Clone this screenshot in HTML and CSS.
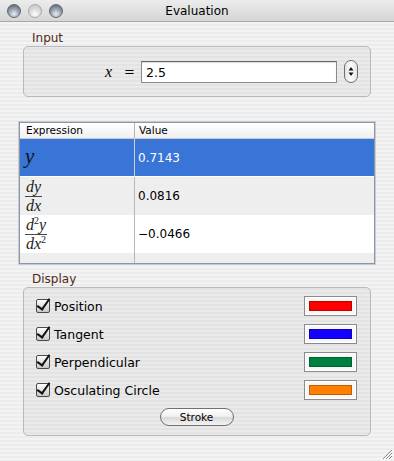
FILE: index.html
```html
<!DOCTYPE html>
<html lang="en">
<head>
    <meta charset="UTF-8">
    <title>Evaluation</title>
    <link rel="stylesheet" href="styles.css">
</head>
<body>
    <div class="window">
        <div class="titlebar">
            <div class="lights">
                <span class="light dark"></span>
                <span class="light pale"></span>
                <span class="light dark"></span>
            </div>
            <div class="title">Evaluation</div>
        </div>

        <div class="content">
            <div class="group-label">Input</div>
            <div class="group input-group">
                <span class="var">x</span>
                <span class="eq">=</span>
                <input class="field" type="text" value="2.5">
                <span class="stepper">
                    <svg width="14" height="23" viewBox="0 0 14 23">
                        <path d="M7 7 L4.5 10.5 H9.5 Z" fill="#111"/>
                        <path d="M7 16 L4.5 12.5 H9.5 Z" fill="#111"/>
                    </svg>
                </span>
            </div>

            <div class="table">
                <div class="thead">
                    <div class="cell col-expr">Expression</div>
                    <div class="cell col-val">Value</div>
                </div>
                <div class="row selected">
                    <div class="cell col-expr"><span class="math big">y</span></div>
                    <div class="cell col-val">0.7143</div>
                </div>
                <div class="row alt">
                    <div class="cell col-expr">
                        <span class="frac math">
                            <span class="num">dy</span>
                            <span class="den">dx</span>
                        </span>
                    </div>
                    <div class="cell col-val">0.0816</div>
                </div>
                <div class="row">
                    <div class="cell col-expr">
                        <span class="frac math">
                            <span class="num">d<sup>2</sup>y</span>
                            <span class="den">dx<sup>2</sup></span>
                        </span>
                    </div>
                    <div class="cell col-val">&minus;0.0466</div>
                </div>
                <div class="row alt filler">
                    <div class="cell col-expr"></div>
                    <div class="cell col-val"></div>
                </div>
            </div>

            <div class="group-label display-label">Display</div>
            <div class="group display-group">
                <div class="option">
                    <span class="check"></span>
                    <span class="opt-name">Position</span>
                    <span class="well"><span class="swatch red"></span></span>
                </div>
                <div class="option">
                    <span class="check"></span>
                    <span class="opt-name">Tangent</span>
                    <span class="well"><span class="swatch blue"></span></span>
                </div>
                <div class="option">
                    <span class="check"></span>
                    <span class="opt-name">Perpendicular</span>
                    <span class="well"><span class="swatch green"></span></span>
                </div>
                <div class="option">
                    <span class="check"></span>
                    <span class="opt-name">Osculating Circle</span>
                    <span class="well"><span class="swatch orange"></span></span>
                </div>
                <div class="buttons">
                    <button class="pill-btn">Stroke</button>
                </div>
            </div>
        </div>

        <svg class="grip" width="12" height="12" viewBox="0 0 12 12">
            <path d="M11 2 L2 11 M11 5 L5 11 M11 8 L8 11" stroke="#888" stroke-width="1"/>
            <path d="M12 3 L3 12 M12 6 L6 12 M12 9 L9 12" stroke="#fff" stroke-width="1"/>
        </svg>
    </div>
</body>
</html>
```

FILE: styles.css
```css
* {
    margin: 0;
    padding: 0;
    box-sizing: border-box;
}

body {
    width: 394px;
    height: 461px;
    overflow: hidden;
    font-family: "DejaVu Sans", "Lucida Grande", sans-serif;
    color: #000;
}

.window {
    position: relative;
    width: 394px;
    height: 461px;
    background: repeating-linear-gradient(to bottom, #ececec 0, #ececec 2px, #f3f3f3 2px, #f3f3f3 4px);
}

/* title bar */
.titlebar {
    height: 22px;
    display: flex;
    align-items: center;
    background: linear-gradient(to bottom, #ececec, #d6d6d6);
    border-bottom: 1px solid #a8a8a8;
    position: relative;
}

.lights {
    display: flex;
    gap: 7px;
    padding-left: 7px;
}

.light {
    width: 14px;
    height: 14px;
    border-radius: 50%;
    border: 1px solid #5f6870;
}

.light.dark {
    background: radial-gradient(circle at 50% 75%, #e9eef3 0, #9aa6b1 45%, #4e5863 100%);
}

.light.pale {
    border-color: #a9a9a9;
    background: radial-gradient(circle at 50% 75%, #ffffff 0, #dadada 50%, #bdbdbd 100%);
}

.title {
    position: absolute;
    left: 0;
    right: 0;
    text-align: center;
    font-size: 12px;
    line-height: 22px;
}

.content {
    padding: 0 23px;
}

.group-label {
    margin-top: 9px;
    padding-left: 9px;
    font-size: 12px;
    line-height: 15px;
    color: #4f2a18;
}

.group {
    border: 1px solid #b9b9b9;
    border-radius: 5px;
    background: rgba(0, 0, 0, 0.035);
}

/* input */
.input-group {
    height: 51px;
    display: flex;
    align-items: center;
    padding-left: 81px;
}

.var {
    font-family: "Liberation Serif", serif;
    font-style: italic;
    font-size: 16px;
    width: 19px;
}

.eq {
    font-size: 13px;
    width: 17px;
}

.field {
    width: 196px;
    height: 22px;
    border: 1px solid #8a8a8a;
    border-top-color: #6a6a6a;
    box-shadow: inset 0 1px 1px rgba(0, 0, 0, 0.15);
    padding: 1px 4px 0;
    font-family: "DejaVu Sans", sans-serif;
    font-size: 12.5px;
    outline: none;
}

.stepper {
    margin-left: 7px;
    width: 14px;
    height: 23px;
    border: 1px solid #6e6e6e;
    border-radius: 7px;
    background: linear-gradient(to right, #e4e4e4, #fdfdfd 50%, #e4e4e4);
    display: flex;
}

.stepper svg {
    margin: -1px;
}

/* table */
.table {
    margin: 25px -4px 0;
    height: 142px;
    border: 1px solid #8d97a3;
    box-shadow: 0 0 0 1px #c3cbd5;
    background: #fff;
    overflow: hidden;
}

.thead {
    display: flex;
    height: 16px;
    border-bottom: 1px solid #c9c9c9;
    background: linear-gradient(to bottom, #ffffff, #f0f0f0);
    font-size: 10.5px;
    line-height: 15px;
}

.cell.col-expr {
    width: 115px;
    border-right: 1px solid #b7b7b7;
    padding-left: 6px;
}

.thead .col-val {
    padding-left: 4px;
}

.row {
    display: flex;
    height: 38px;
    align-items: stretch;
    font-size: 12px;
}

.row .cell {
    display: flex;
    align-items: center;
}

.row .col-val {
    padding-left: 3px;
}

.row .col-expr {
    padding-left: 4px;
}

.row.alt {
    background: #eeeeee;
}

.row.selected {
    background: #3875d7;
    color: #fff;
    border-bottom: 1px solid #fff;
}

.row.selected .col-expr {
    color: #111;
    border-right-color: #d0d0d0;
}

.math {
    font-family: "Liberation Serif", serif;
    font-style: italic;
}

.math.big {
    font-size: 21px;
    padding-left: 1px;
    margin-top: -2px;
}

.frac {
    display: inline-flex;
    flex-direction: column;
    align-items: center;
    font-size: 16px;
    line-height: 14px;
    color: #222;
    margin-left: 1px;
}

.frac .num {
    padding: 0 1px 2px;
    border-bottom: 1px solid #444;
}

.frac .den {
    padding-top: 2px;
}

.frac sup {
    font-size: 10px;
    font-style: normal;
    vertical-align: 6px;
    line-height: 0;
}

/* display */
.display-label {
    margin-top: 8px;
}

.display-group {
    height: 149px;
    padding: 4px 13px 0 12px;
}

.option {
    display: flex;
    align-items: center;
    height: 28px;
}

.check {
    width: 14px;
    height: 14px;
    border: 1px solid #4a4a4a;
    border-radius: 2px;
    background: linear-gradient(to bottom, #fdfdfd, #c9c9c9);
    position: relative;
}

.check::after {
    content: "";
    position: absolute;
    left: 3px;
    top: -4px;
    width: 5px;
    height: 12px;
    border-right: 2.5px solid #111;
    border-bottom: 2.5px solid #111;
    transform: rotate(35deg);
}

.opt-name {
    flex: 1;
    margin-left: 4px;
    font-size: 12.5px;
}

.well {
    width: 53px;
    height: 20px;
    border: 1px solid #8a8a8a;
    background: #f7f7f7;
    box-shadow: inset 0 0 0 1px #ffffff;
    display: flex;
    align-items: center;
    justify-content: center;
}

.swatch {
    width: 43px;
    height: 10px;
    border: 1px solid rgba(0, 0, 0, 0.25);
}

.swatch.red { background: #ff0000; }
.swatch.blue { background: #1400ff; }
.swatch.green { background: #008040; }
.swatch.orange { background: #ff8000; }

.buttons {
    display: flex;
    justify-content: center;
    margin-top: 4px;
}

.pill-btn {
    width: 74px;
    height: 18px;
    border: 1px solid #707070;
    border-radius: 9px;
    background: linear-gradient(to bottom, #ffffff, #f1f1f1 45%, #d9d9d9 55%, #f4f4f4);
    font-family: "DejaVu Sans", sans-serif;
    font-size: 10.5px;
    line-height: 15px;
    color: #000;
}

.grip {
    position: absolute;
    right: 1px;
    bottom: 1px;
}
```
